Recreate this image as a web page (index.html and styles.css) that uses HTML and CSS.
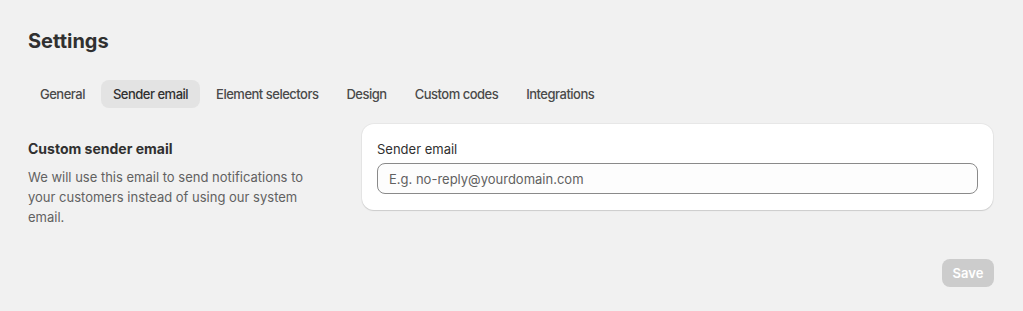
FILE: index.html
```html
<!DOCTYPE html>
<html lang="en">
<head>
<meta charset="utf-8">
<title>Settings</title>
<link rel="stylesheet" href="styles.css">
</head>
<body>
<div class="page">
  <h1 class="title">Settings</h1>
  <nav class="tabs">
    <button class="tab">General</button>
    <button class="tab tab-active">Sender email</button>
    <button class="tab">Element selectors</button>
    <button class="tab">Design</button>
    <button class="tab">Custom codes</button>
    <button class="tab">Integrations</button>
  </nav>
  <section class="section">
    <div class="annotation">
      <h2 class="annotation-title">Custom sender email</h2>
      <p class="annotation-desc">We will use this email to send notifications to your customers instead of using our system email.</p>
    </div>
    <div class="card">
      <label class="field-label" for="sender">Sender email</label>
      <input class="field-input" id="sender" type="text" placeholder="E.g. no-reply@yourdomain.com">
    </div>
  </section>
  <div class="actions">
    <button class="save" disabled>Save</button>
  </div>
</div>
</body>
</html>
```

FILE: styles.css
```css
* { box-sizing: border-box; }
html, body {
  margin: 0;
  background: #f1f1f1;
  font-family: Inter, "Noto Sans", sans-serif;
  color: #303030;
}
.page {
  padding: 29px 28px 0 28px;
}
.title {
  margin: 0;
  font-size: 20px;
  line-height: 24px;
  font-weight: 700;
  color: #303030;
}
.tabs {
  display: flex;
  gap: 4px;
  margin-top: 27px;
}
.tab {
  height: 28px;
  padding: 0 12px;
  border: 0;
  border-radius: 8px;
  background: transparent;
  font-family: inherit;
  font-size: 13px;
  font-weight: 550;
  letter-spacing: -0.5px;
  color: #4a4a4a;
  cursor: pointer;
}
.tab-active {
  background: #e3e3e3;
  color: #303030;
}
.section {
  display: grid;
  grid-template-columns: 314px 631px;
  gap: 20px;
  align-items: start;
  margin-top: 16px;
}
.annotation {
  padding-top: 15px;
}
.annotation-title {
  margin: 0;
  font-size: 14px;
  line-height: 20px;
  font-weight: 650;
  color: #303030;
}
.annotation-desc {
  margin: 8px 0 0 0;
  max-width: 290px;
  font-size: 13px;
  line-height: 20px;
  color: #616161;
}
.card {
  background: #ffffff;
  border-radius: 12px;
  padding: 15px 15px 16px 15px;
  box-shadow: 0 1px 0 0 rgba(26, 26, 26, 0.07), 0 0 0 1px rgba(0, 0, 0, 0.04), 0 1px 2px rgba(0, 0, 0, 0.06);
  display: flex;
  flex-direction: column;
  gap: 4px;
}
.field-label {
  font-size: 13px;
  line-height: 20px;
  font-weight: 400;
  color: #303030;
}
.field-input {
  height: 31px;
  padding: 0 11px;
  border: 1px solid #8a8a8a;
  border-radius: 8px;
  background: #fdfdfd;
  font-family: inherit;
  font-size: 13px;
  color: #303030;
  outline: none;
}
.field-input::placeholder {
  color: #616161;
}
.actions {
  display: flex;
  justify-content: flex-end;
  margin-top: 32px;
}
.save {
  width: 52px;
  height: 28px;
  border: 0;
  border-radius: 8px;
  background: #cccccc;
  color: #ffffff;
  font-family: inherit;
  font-size: 13px;
  font-weight: 600;
  margin-right: 1px;
}
```
